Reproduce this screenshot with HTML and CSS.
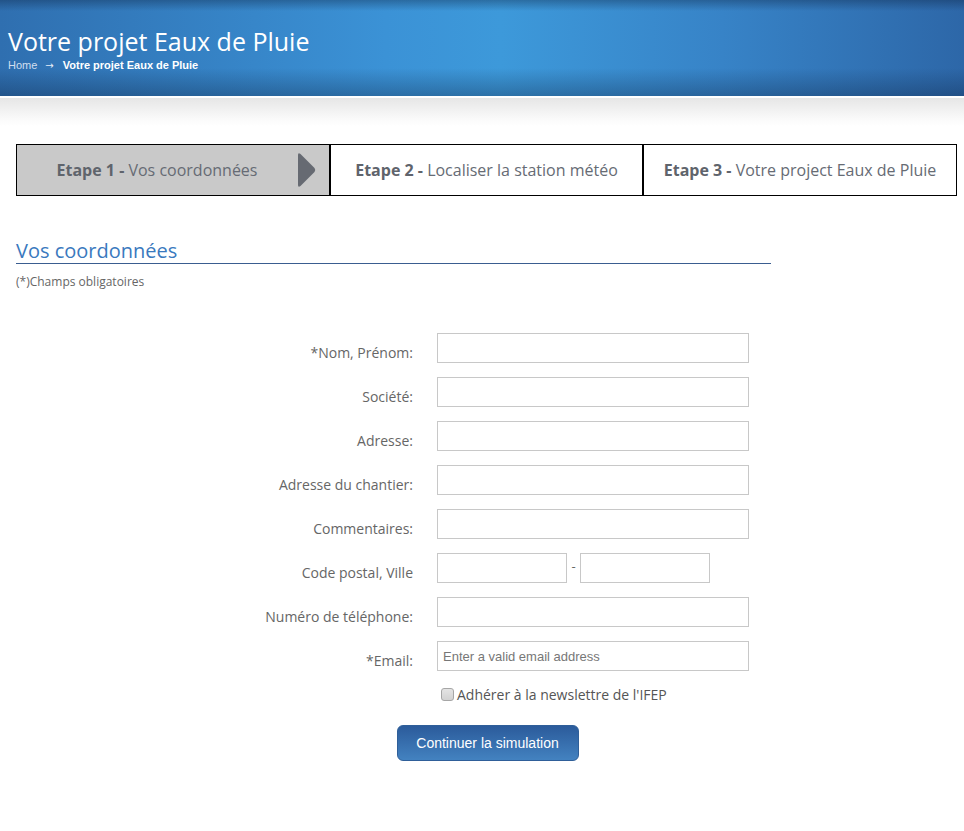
FILE: index.html
```html
<!DOCTYPE html>
<html lang="fr">
<head>
<meta charset="utf-8">
<title>Votre projet Eaux de Pluie</title>
<link rel="stylesheet" href="styles.css">
</head>
<body>
<header class="banner">
  <h1 class="banner-title">Votre projet Eaux de Pluie</h1>
  <nav class="crumbs"><a class="crumb-link" href="#">Home</a><span class="crumb-sep">→</span><span class="crumb-current">Votre projet Eaux de Pluie</span></nav>
</header>
<div class="shade"></div>
<main class="content">
  <ol class="steps">
    <li class="step step-active"><span><b>Etape 1 -</b> Vos coordonnées</span>
      <svg class="step-arrow" width="20" height="36" viewBox="0 0 20 36"><path d="M2 3 Q2 0 4.5 2 L18.5 16 Q20 18 18.5 20 L4.5 34 Q2 36 2 33 Z" fill="#666a72"/></svg>
    </li>
    <li class="step"><span><b>Etape 2 -</b> Localiser la station météo</span></li>
    <li class="step"><span><b>Etape 3 -</b> Votre project Eaux de Pluie</span></li>
  </ol>

  <section class="section">
    <h2 class="section-title">Vos coordonnées</h2>
    <p class="note">(*)Champs obligatoires</p>
  </section>

  <form class="form">
    <label class="label">*Nom, Prénom:</label><input class="field" type="text">
    <label class="label">Société:</label><input class="field" type="text">
    <label class="label">Adresse:</label><input class="field" type="text">
    <label class="label">Adresse du chantier:</label><input class="field" type="text">
    <label class="label">Commentaires:</label><input class="field" type="text">
    <label class="label">Code postal, Ville</label>
    <div class="pair"><input class="field field-half" type="text"><span class="dash">-</span><input class="field field-half" type="text"></div>
    <label class="label">Numéro de téléphone:</label><input class="field" type="text">
    <label class="label">*Email:</label><input class="field field-email" type="text" placeholder="Enter a valid email address">
    <span></span>
    <label class="check"><input class="checkbox" type="checkbox"> Adhérer à la newslettre de l'IFEP</label>
    <div class="actions"><button class="btn" type="button">Continuer la simulation</button></div>
  </form>
</main>
</body>
</html>
```

FILE: styles.css
```css
* { box-sizing: border-box; }
body {
  margin: 0;
  font-family: "Open Sans", "Liberation Sans", sans-serif;
  color: #666;
  background: #fff;
}
.banner {
  height: 96px;
  padding: 24px 8px 0;
  background:
    linear-gradient(to bottom, rgba(10,30,60,.35) 0, rgba(10,30,60,0) 11px, rgba(10,30,60,0) 68px, rgba(10,30,60,.32) 96px),
    linear-gradient(to right, #2f6fb0 0%, #3b92d6 40%, #3d99da 52%, #3783c7 75%, #2d67a8 100%);
}
.banner-title {
  margin: 0;
  font-weight: 400;
  font-size: 25px;
  line-height: 34px;
  color: #fff;
}
.crumbs {
  font-family: "Liberation Sans", Arial, sans-serif;
  font-size: 11px;
  line-height: 14px;
  color: #fff;
}
.crumb-link { color: #d2deef; text-decoration: none; }
.crumb-sep {
  font-family: "DejaVu Sans", sans-serif;
  font-size: 10px;
  color: #e6eef8;
  margin: 0 9px 0 8px;
}
.crumb-current { font-weight: 700; }
.shade {
  height: 30px;
  border-top: 2px solid #fff;
  background: linear-gradient(to bottom, #e6e6e6, #fbfbfb 80%, #fff);
}
.content { padding: 18px 7px 40px 16px; }
.steps {
  list-style: none;
  margin: 0;
  padding: 0;
  display: grid;
  grid-template-columns: 314px 313px 314px;
}
.step {
  position: relative;
  height: 52px;
  border: 1px solid #000;
  display: flex;
  align-items: center;
  justify-content: center;
  font-size: 16px;
  color: #666b74;
  background: #fff;
}
.step b { font-weight: 700; color: #5f646c; }
.step-active { background: #c9c9c9; padding-right: 32px; }
.step-arrow { position: absolute; right: 13px; top: 7px; }
.section { width: 755px; margin-top: 43px; }
.section-title {
  margin: 0;
  font-weight: 400;
  font-size: 20px;
  line-height: 24px;
  color: #3a79be;
  border-bottom: 1px solid #3a5d90;
}
.note { margin: 10px 0 0; font-size: 12px; line-height: 16px; color: #666; }
.form {
  margin-top: 43px;
  display: grid;
  grid-template-columns: 397px 312px;
  column-gap: 24px;
  row-gap: 14px;
}
.label {
  text-align: right;
  font-size: 14px;
  line-height: 20px;
  padding-top: 10px;
  color: #666;
}
.field {
  height: 30px;
  width: 312px;
  border: 1px solid #c8c8c8;
  background: #fff;
  padding: 0 5px;
  font-family: "Liberation Sans", Arial, sans-serif;
  font-size: 13px;
  color: #555;
  outline: none;
}
.field::placeholder { color: #777; }
.pair { display: flex; align-items: flex-start; }
.field-half { width: 130px; }
.dash { width: 13px; text-align: center; font-size: 13px; line-height: 26px; color: #666; }
.check {
  display: flex;
  align-items: center;
  gap: 3px;
  height: 26px;
  margin-top: -4px;
  font-size: 14px;
  color: #555;
}
.checkbox {
  appearance: none;
  -webkit-appearance: none;
  width: 13px;
  height: 13px;
  margin: 0 0 0 4px;
  border: 1px solid #a6a6a6;
  border-radius: 3px;
  background: linear-gradient(to bottom, #e4e4e4, #d2d2d2);
}
.actions {
  grid-column: 1 / -1;
  width: 941px;
  display: flex;
  justify-content: center;
  margin-top: 4px;
  padding-left: 2px;
}
.btn {
  width: 182px;
  height: 36px;
  border: 1px solid #2f5f99;
  border-radius: 6px;
  background: linear-gradient(to bottom, #2b5b9b, #4382c0);
  color: #fff;
  font-family: "Liberation Sans", Arial, sans-serif;
  font-size: 14px;
  cursor: pointer;
}
```
